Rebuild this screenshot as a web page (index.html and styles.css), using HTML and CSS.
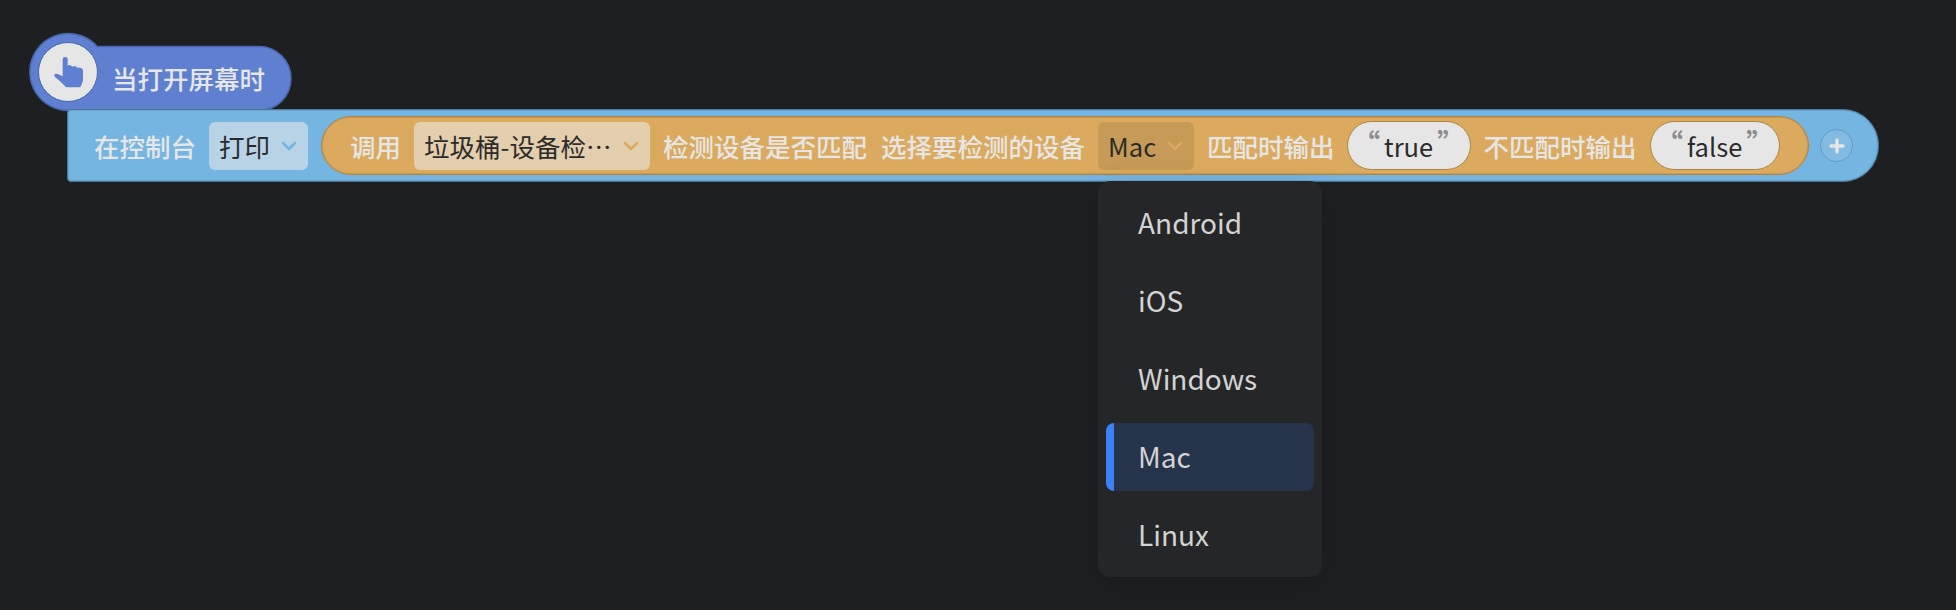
FILE: index.html
```html
<!DOCTYPE html>
<html lang="zh-CN">
<head>
<meta charset="utf-8">
<title>Blocks</title>
<link rel="stylesheet" href="styles.css">
</head>
<body>
<main class="workspace">
  <div class="event">
    <svg class="event-shape" width="264" height="80" viewBox="0 0 264 80">
      <path d="M68.200 14.500 A38.500 38.500 0 1 0 39.300 78.500 H230 A32 32 0 0 0 230 14.500 Z"/>
    </svg>
    <span class="event-icon">
      <svg width="31" height="32" viewBox="96 108 93 96"><path d="M125 117 Q125 111 132.500 111 Q140 111 140 117 V137 Q147 132 154 140 Q162 135 170 143 Q178 140 185 148 Q187 151 186 165 V182 L181 196 Q180 202 174 202 H138 Q133 202 131 197 Q121 187 103 172 Q97 167 101 162 Q106 159 115 164 L125 169 Z"/></svg>
    </span>
    <span class="label">当打开屏幕时</span>
  </div>

  <div class="statement">
    <span class="label">在控制台</span>
    <span class="field field-blue"><span>打印</span><svg class="chevron" width="16" height="10" viewBox="0 0 16 10"><path d="M2 2 L8 8 L14 2"/></svg></span>
    <div class="call">
      <span class="label">调用</span>
      <span class="field field-sand"><span class="clip">垃圾桶-设备检⋯</span><svg class="chevron" width="16" height="10" viewBox="0 0 16 10"><path d="M2 2 L8 8 L14 2"/></svg></span>
      <span class="label">检测设备是否匹配</span>
      <span class="label label-param">选择要检测的设备</span>
      <div class="field field-open">
        <span>Mac</span><svg class="chevron" width="16" height="10" viewBox="0 0 16 10"><path d="M2 2 L8 8 L14 2"/></svg>
        <ul class="menu">
          <li class="option">Android</li>
          <li class="option">iOS</li>
          <li class="option">Windows</li>
          <li class="option selected">Mac</li>
          <li class="option">Linux</li>
        </ul>
      </div>
      <span class="label">匹配时输出</span>
      <span class="text-value value-true"><span class="quote">“</span><span>true</span><span class="quote">”</span></span>
      <span class="label">不匹配时输出</span>
      <span class="text-value value-false"><span class="quote">“</span><span>false</span><span class="quote">”</span></span>
    </div>
    <span class="add"><svg width="16" height="16" viewBox="0 0 16 16"><path d="M8 2 V14 M2 8 H14"/></svg></span>
  </div>
</main>
</body>
</html>
```
FILE: styles.css
```css
* { box-sizing: border-box; }

body {
  margin: 0;
  background: #1e1f21;
  font-family: "Noto Sans CJK SC", sans-serif;
  font-size: 25.5px;
  line-height: 36px;
  overflow: hidden;
}

.workspace {
  height: 610px;
  padding: 32px 0 0 29px;
}

.event {
  position: relative;
  display: flex;
  width: 264px;
  height: 77px;
}

.event-shape {
  position: absolute;
  left: 0;
  top: 0;
  overflow: visible;
}

.event-shape path {
  fill: #5f80d1;
  stroke: #4a66b0;
  stroke-width: 1.5;
}

.event-icon {
  position: relative;
  display: flex;
  align-items: center;
  justify-content: center;
  width: 60px;
  height: 60px;
  margin: 10px 0 0 9px;
  border: 1px solid #4a66b0;
  border-radius: 50%;
  background: #e6e6e6;
}

.event-icon path { fill: #5f80d1; }

.event .label {
  position: relative;
  margin: 28px 0 0 14px;
}

.label {
  flex: none;
  color: #e6e6e6;
  font-weight: 500;
  white-space: nowrap;
}

.label-param { margin-left: 1px; }

.statement {
  position: relative;
  display: flex;
  align-items: center;
  gap: 13px;
  width: 1812px;
  height: 73px;
  margin-left: 38px;
  padding-left: 26px;
  border: 1px solid #4a7796;
  border-radius: 4px 36px 36px 4px;
  background: #75b5e1;
  box-shadow: inset 0 0 0 1px #69a5cf;
}

.field {
  display: flex;
  flex: none;
  align-items: center;
  justify-content: space-between;
  height: 48px;
  padding: 0 11px 0 10px;
  border-radius: 6px;
  color: #2b2b2b;
  white-space: nowrap;
}

.field-blue { width: 99px; background: #b7d3e5; }
.field-sand { width: 236px; background: #e3ceae; }
.field-open { position: relative; width: 96px; background: #c69b57; }

.chevron {
  flex: none;
  fill: none;
  stroke: #dcaa5e;
  stroke-width: 2.5;
  stroke-linecap: round;
  stroke-linejoin: round;
}

.field-blue .chevron { stroke: #75b5e1; }

.call {
  display: flex;
  flex: none;
  align-items: center;
  gap: 13px;
  width: 1488px;
  height: 59px;
  margin-right: -2px;
  padding-left: 28px;
  border: 1px solid #ad8445;
  border-radius: 30px;
  background: #dcaa5e;
  box-shadow: inset 0 0 0 1px #cb9b53;
}

.text-value {
  display: flex;
  flex: none;
  align-items: center;
  justify-content: center;
  gap: 4px;
  height: 49px;
  border: 1px solid #ad8445;
  border-radius: 25px;
  background: #e6e6e6;
  color: #2b2b2b;
}

.value-true { width: 124px; margin-left: -1px; }
.value-false { width: 130px; }

.quote {
  align-self: flex-start;
  margin-top: 3px;
  color: #8c8c8c;
  font-size: 27px;
  font-weight: 700;
}

.add {
  display: flex;
  flex: none;
  align-items: center;
  justify-content: center;
  width: 33px;
  height: 33px;
  border: 1px solid #5f9dc8;
  border-radius: 50%;
  background: #82bae1;
}

.add path {
  stroke: #e6e6e6;
  stroke-width: 3.4;
  stroke-linecap: round;
}

.menu {
  position: absolute;
  left: 0;
  top: 59px;
  display: flex;
  flex-direction: column;
  gap: 10px;
  width: 224px;
  margin: 0;
  padding: 8px;
  border-radius: 12px;
  background: #252628;
  box-shadow: 0 8px 32px rgba(0, 0, 0, 0.14);
  list-style: none;
}

.option {
  height: 68px;
  padding-left: 24px;
  border-left: 8px solid transparent;
  border-radius: 8px;
  color: #d3d3d3;
  font-size: 28px;
  line-height: 66px;
}

.selected {
  border-left-color: #3b82f9;
  background: #25344b;
}
```
